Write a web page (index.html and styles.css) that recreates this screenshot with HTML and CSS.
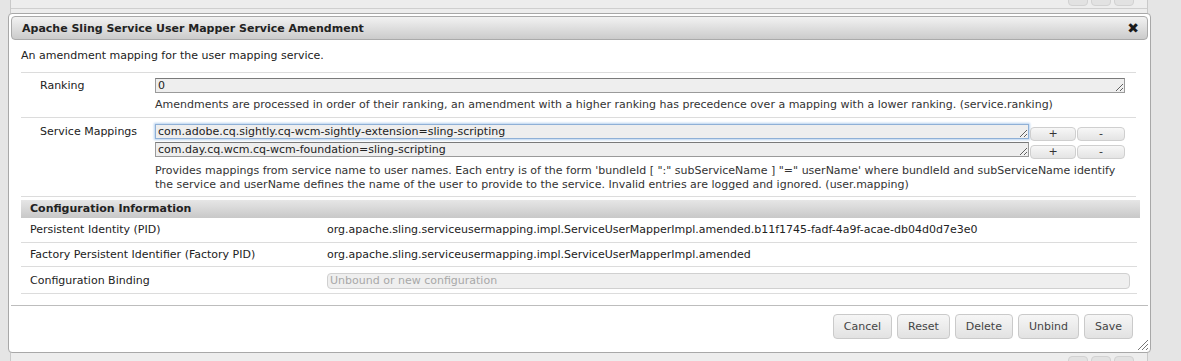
FILE: index.html
```html
<!DOCTYPE html>
<html lang="en">
<head>
    <meta charset="UTF-8">
    <title>Apache Sling Service User Mapper Service Amendment</title>
    <link rel="stylesheet" href="styles.css">
</head>
<body>
    <div class="backdrop">
        <div class="strip strip-top">
            <span class="mini"></span><span class="mini"></span><span class="mini"></span>
        </div>

        <div class="dialog">
            <div class="titlebar">
                <span class="title">Apache Sling Service User Mapper Service Amendment</span>
                <span class="close">&#10006;</span>
            </div>

            <div class="dialog-body">
                <p class="desc">An amendment mapping for the user mapping service.</p>

                <div class="props">
                    <div class="prop">
                        <div class="prop-label">Ranking</div>
                        <div class="prop-value">
                            <textarea class="field" rows="1">0</textarea>
                            <div class="help">Amendments are processed in order of their ranking, an amendment with a higher ranking has precedence over a mapping with a lower ranking. (service.ranking)</div>
                        </div>
                    </div>
                    <div class="prop prop-multi">
                        <div class="prop-label">Service Mappings</div>
                        <div class="prop-value">
                            <div class="entry">
                                <textarea class="field focused" rows="1">com.adobe.cq.sightly.cq-wcm-sightly-extension=sling-scripting</textarea>
                                <button class="small-btn">+</button>
                                <button class="small-btn">-</button>
                            </div>
                            <div class="entry">
                                <textarea class="field" rows="1">com.day.cq.wcm.cq-wcm-foundation=sling-scripting</textarea>
                                <button class="small-btn">+</button>
                                <button class="small-btn">-</button>
                            </div>
                            <div class="help help-multi">Provides mappings from service name to user names. Each entry is of the form 'bundleId [ ":" subServiceName ] "=" userName' where bundleId and subServiceName identify the service and userName defines the name of the user to provide to the service. Invalid entries are logged and ignored. (user.mapping)</div>
                        </div>
                    </div>
                </div>

                <div class="config">
                    <div class="config-head">Configuration Information</div>
                    <div class="config-row">
                        <div>Persistent Identity (PID)</div>
                        <div>org.apache.sling.serviceusermapping.impl.ServiceUserMapperImpl.amended.b11f1745-fadf-4a9f-acae-db04d0d7e3e0</div>
                    </div>
                    <div class="config-row">
                        <div>Factory Persistent Identifier (Factory PID)</div>
                        <div>org.apache.sling.serviceusermapping.impl.ServiceUserMapperImpl.amended</div>
                    </div>
                    <div class="config-row binding-row">
                        <div>Configuration Binding</div>
                        <div class="binding">Unbound or new configuration</div>
                    </div>
                </div>
            </div>

            <div class="button-pane">
                <button class="btn">Cancel</button>
                <button class="btn">Reset</button>
                <button class="btn">Delete</button>
                <button class="btn">Unbind</button>
                <button class="btn">Save</button>
            </div>

            <svg class="grip" width="12" height="12" viewBox="0 0 12 12">
                <line x1="11" y1="1" x2="1" y2="11" stroke="#777" stroke-width="1"/>
                <line x1="11" y1="5" x2="5" y2="11" stroke="#777" stroke-width="1"/>
                <line x1="11" y1="9" x2="9" y2="11" stroke="#777" stroke-width="1"/>
            </svg>
        </div>

        <div class="strip strip-bottom">
            <span class="mini"></span><span class="mini"></span><span class="mini"></span>
        </div>
    </div>
</body>
</html>
```

FILE: styles.css
```css
body {
    margin: 0;
    background: #e5e5e5;
    font-family: "DejaVu Sans", Verdana, sans-serif;
    font-size: 11px;
    color: #222;
    overflow: hidden;
}
.backdrop {
    margin-left: 10px;
    width: 1136px;
    height: 361px;
    background: #ededed;
    border-left: 1px solid #c9c9c9;
    border-right: 1px solid #c9c9c9;
}
.strip {
    display: flex;
    justify-content: flex-end;
    gap: 3px;
    padding-right: 13px;
}
.strip-top {
    height: 8px;
    border-bottom: 1px solid #cfcfcf;
}
.strip-top .mini {
    margin-top: -6px;
    border-radius: 0 0 4px 4px;
}
.strip-bottom {
    height: 6px;
    padding-top: 3px;
}
.strip-bottom .mini {
    border-radius: 4px 4px 0 0;
}
.mini {
    width: 18px;
    height: 10px;
    background: #e2e2e2;
    border: 1px solid #d2d2d2;
}
.dialog {
    position: relative;
    margin: 4px 0 0 -3px;
    width: 1137px;
    padding: 2px;
    background: #fff;
    border: 1px solid #a8a8a8;
    border-radius: 4px;
}
.titlebar {
    display: flex;
    justify-content: space-between;
    align-items: center;
    height: 22px;
    padding: 0 8px 0 10px;
    border: 1px solid #aaa;
    border-radius: 4px;
    background: linear-gradient(#f2f2f2, #cbcbcb);
    font-weight: bold;
    color: #222;
}
.close {
    font-size: 14px;
    color: #1a1a1a;
}
.dialog-body {
    padding: 9px 11px 0 10px;
}
.desc {
    margin: 0 0 9px;
    line-height: 14px;
}
.props {
    border-top: 1px solid #dcdcdc;
    margin-right: 1px;
}
.prop {
    display: grid;
    grid-template-columns: 134px 1fr;
    padding: 5px 11px 5px 0;
    border-bottom: 1px solid #dcdcdc;
    line-height: 14px;
}
.prop-multi {
    padding: 6px 11px 4px 0;
}
.prop-label {
    padding-left: 19px;
    padding-top: 1px;
    color: #222;
}
.field {
    display: block;
    box-sizing: border-box;
    width: 100%;
    height: 15px;
    margin: 0;
    padding: 0 2px;
    font-family: inherit;
    font-size: 11px;
    line-height: 13px;
    color: #222;
    background: #eeeeee;
    border: 1px solid #9a9a9a;
    border-top-color: #7a7a7a;
    overflow: hidden;
    resize: vertical;
}
.focused {
    outline: none;
    border-color: #8fb0d6;
    box-shadow: 0 0 2px 1px #b8d2ef;
}
.help {
    margin-top: 5px;
    color: #333;
}
.help-multi {
    margin-top: 4px;
}
.entry {
    display: flex;
    align-items: flex-start;
    height: 18px;
    gap: 1px;
}
.entry .field {
    flex: 1;
}
.small-btn {
    margin-top: 3px;
    height: 14px;
    width: 46px;
    padding: 0;
    font-family: inherit;
    font-size: 11px;
    line-height: 12px;
    color: #333;
    background: linear-gradient(#f7f7f7, #e4e4e4);
    border: 1px solid #cfcfcf;
    border-radius: 4px;
}
.small-btn + .small-btn {
    width: 48px;
}
.config {
    margin: 3px -3px 0 0;
}
.config-head {
    height: 18px;
    line-height: 18px;
    padding-left: 9px;
    font-weight: bold;
    color: #222;
    background: linear-gradient(#e6e6e6, #c8c8c8);
}
.config-row {
    display: grid;
    grid-template-columns: 297px 1fr;
    padding-left: 9px;
    line-height: 24px;
    border-bottom: 1px solid #dcdcdc;
    margin-right: 3px;
}
.config-row + .config-row {
    line-height: 23px;
}
.binding-row {
    padding: 6px 0 4px 9px;
    align-items: center;
}
.config-row.binding-row {
    line-height: 14px;
}
.binding {
    height: 14px;
    margin-right: 7px;
    padding-left: 2px;
    line-height: 14px;
    color: #a8a8a8;
    background: #efefef;
    border: 1px solid #d0d0d0;
    border-radius: 4px;
}
.button-pane {
    display: flex;
    justify-content: flex-end;
    gap: 5px;
    margin-top: 11px;
    padding: 8px 15px 11px 0;
    border-top: 1px solid #bdbdbd;
}
.btn {
    height: 25px;
    padding: 0 10px;
    font-family: inherit;
    font-size: 11px;
    color: #444;
    background: linear-gradient(#f6f6f6, #e2e2e2);
    border: 1px solid #cacaca;
    border-radius: 4px;
}
.grip {
    position: absolute;
    right: 1px;
    bottom: 1px;
}
```
